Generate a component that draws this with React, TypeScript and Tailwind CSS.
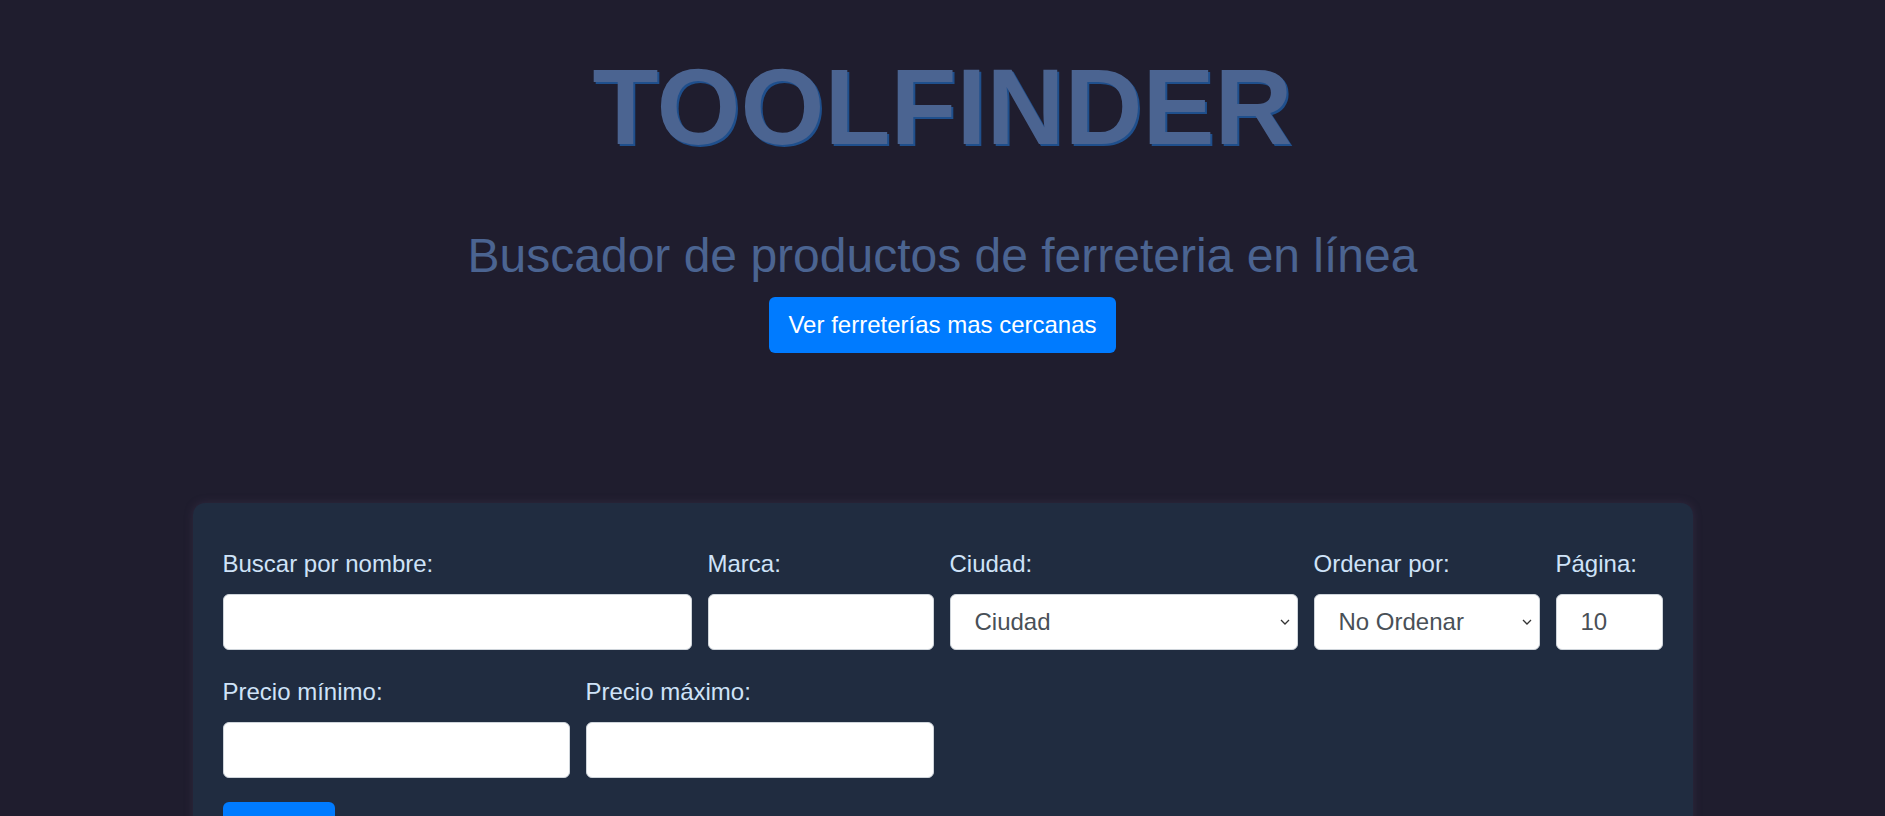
const labelCls = "mb-3 block text-[24px] leading-9 text-[#cfe3f8]";
const inputCls =
  "h-14 w-full rounded-md border border-[#ced4da] bg-white px-6 text-[24px] text-[#495057] outline-none";

function Field({ label, width, children }: { label: string; width: string; children: React.ReactNode }) {
  return (
    <div className={width}>
      <label className={labelCls}>{label}</label>
      {children}
    </div>
  );
}

function Select({ value, options }: { value: string; options: string[] }) {
  return (
    <div className="relative">
      <select defaultValue={value} className={`${inputCls} appearance-none pr-10`}>
        {options.map((o) => (
          <option key={o}>{o}</option>
        ))}
      </select>
      <svg
        className="pointer-events-none absolute right-[8px] top-1/2 -translate-y-1/2"
        width="10"
        height="7"
        viewBox="0 0 10 7"
        fill="none"
      >
        <path d="M1 1.5l4 4 4-4" stroke="#333" strokeWidth="1.3" />
      </svg>
    </div>
  );
}

export default function App() {
  return (
    <div className="min-h-screen bg-[#1f1d2e] font-['Liberation_Sans',Arial,sans-serif]">
      <header className="flex flex-col items-center pt-[42px]">
        <h1 className="text-[108px] font-bold leading-[130px] text-[#4b6491] [text-shadow:2px_2px_0_#1f4f8c]">
          TOOLFINDER
        </h1>
        <h2 className="mt-[55px] text-[48px] leading-[58px] text-[#4b6491]">
          Buscador de productos de ferreteria en línea
        </h2>
        <button className="mt-3 h-14 rounded-md bg-[#007bff] px-[19px] text-[24px] text-white">
          Ver ferreterías mas cercanas
        </button>
      </header>

      <main className="mx-auto mt-[150px] w-[1500px] rounded-xl bg-[#202c40] px-[30px] pb-[30px] pt-[43px] shadow-[0_0_8px_rgba(70,55,85,0.45)]">
        <div className="flex gap-4">
          <Field label="Buscar por nombre:" width="w-[469px]">
            <input type="text" className={inputCls} />
          </Field>
          <Field label="Marca:" width="w-[226px]">
            <input type="text" className={inputCls} />
          </Field>
          <Field label="Ciudad:" width="w-[348px]">
            <Select value="Ciudad" options={["Ciudad"]} />
          </Field>
          <Field label="Ordenar por:" width="w-[226px]">
            <Select value="No Ordenar" options={["No Ordenar", "Precio ascendente", "Precio descendente"]} />
          </Field>
          <Field label="Página:" width="w-[107px]">
            <input type="number" defaultValue={10} className={inputCls} />
          </Field>
        </div>

        <div className="mt-6 flex gap-4">
          <Field label="Precio mínimo:" width="w-[347px]">
            <input type="number" className={inputCls} />
          </Field>
          <Field label="Precio máximo:" width="w-[348px]">
            <input type="number" className={inputCls} />
          </Field>
        </div>

        <button className="mt-6 h-14 rounded-md bg-[#007bff] px-[19px] text-[24px] text-white">Buscar</button>
      </main>
    </div>
  );
}
